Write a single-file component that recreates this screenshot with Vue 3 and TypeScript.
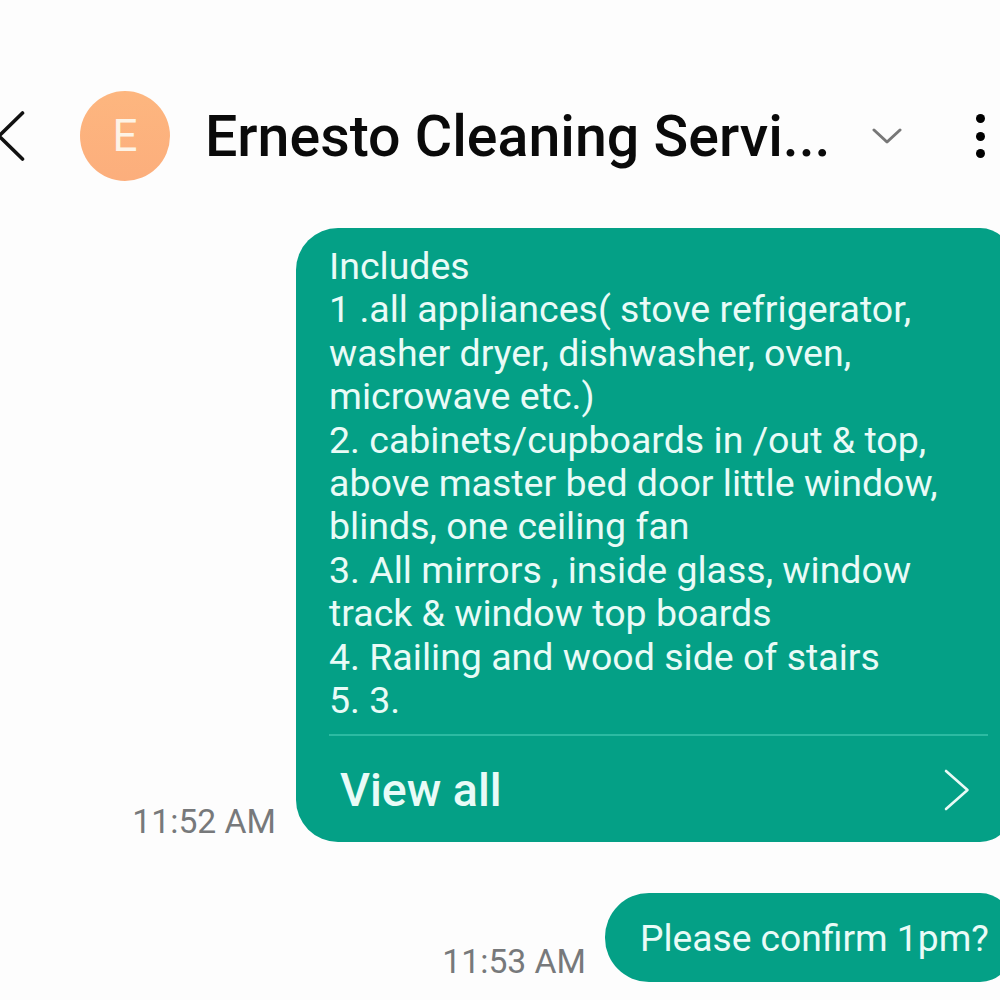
<script setup lang="ts">
const lines = [
  'Includes',
  '1 .all appliances( stove refrigerator,',
  'washer dryer, dishwasher, oven,',
  'microwave etc.)',
  '2. cabinets/cupboards in /out & top,',
  'above master bed door little window,',
  'blinds, one ceiling fan',
  '3. All mirrors , inside glass, window',
  'track & window top boards',
  '4. Railing and wood side of stairs',
  '5. 3.',
]
</script>

<template>
  <div class="screen">
    <header class="top-bar">
      <svg class="back" width="26" height="52" viewBox="0 0 26 52">
        <path d="M22.5 3 L-1 26 L22.5 49" fill="none" stroke="#111" stroke-width="3.6" stroke-linecap="round" stroke-linejoin="round" />
      </svg>
      <div class="avatar">E</div>
      <div class="title">Ernesto Cleaning Servi...</div>
      <svg class="caret" width="30" height="18" viewBox="0 0 30 18">
        <path d="M2 3 L15 15 L28 3" fill="none" stroke="#777" stroke-width="3" stroke-linecap="round" stroke-linejoin="round" />
      </svg>
      <div class="more">
        <span />
        <span />
        <span />
      </div>
    </header>

    <section class="thread">
      <div class="row first">
        <div class="time">11:52 AM</div>
        <div class="bubble big">
          <div class="body">
            <div v-for="line in lines" :key="line" class="line">{{ line }}</div>
          </div>
          <div class="view-all">
            <span>View all</span>
            <svg width="26" height="42" viewBox="0 0 26 42">
              <path d="M2 2 L23.5 21 L2 40" fill="none" stroke="#eafaf6" stroke-width="2.6" stroke-linecap="round" stroke-linejoin="round" />
            </svg>
          </div>
        </div>
      </div>

      <div class="row second">
        <div class="time">11:53 AM</div>
        <div class="bubble small">Please confirm 1pm?</div>
      </div>
    </section>
  </div>
</template>

<style scoped>
.screen {
  width: 1000px;
  height: 1000px;
  overflow: hidden;
  background: #fdfdfd;
  font-family: Roboto, "Liberation Sans", sans-serif;
}

.top-bar {
  display: flex;
  align-items: center;
  height: 90px;
  padding-top: 91px;
}

.back {
  flex: none;
  margin-right: -2px;
}

.avatar {
  flex: none;
  width: 90px;
  height: 90px;
  margin-left: 56px;
  border-radius: 50%;
  background: linear-gradient(180deg, #fdb67f, #fcae7c);
  color: #fdf3e6;
  font-size: 44px;
  line-height: 90px;
  text-align: center;
}

.title {
  flex: none;
  width: 668px;
  margin-left: 35px;
  margin-right: -30px;
  color: #0a0a0a;
  font-size: 57.3px;
  font-weight: 500;
  white-space: nowrap;
}

.caret {
  flex: none;
  margin-left: 29px;
}

.more {
  display: flex;
  flex: none;
  flex-direction: column;
  gap: 8.5px;
  margin-left: 74px;
}

.more span {
  width: 9px;
  height: 9px;
  border-radius: 50%;
  background: #000;
}

.thread {
  display: flex;
  flex-direction: column;
  gap: 51px;
  padding-top: 47px;
}

.row {
  display: flex;
  align-items: flex-end;
  justify-content: flex-end;
  margin-right: -12px;
}

.time {
  color: #77797b;
  font-size: 33.7px;
  white-space: nowrap;
}

.bubble {
  background: #04a086;
  color: #e9fbf7;
  box-sizing: border-box;
}

.first .time {
  margin-right: 20px;
  margin-bottom: 1px;
}

.second .time {
  margin-right: 19px;
  margin-bottom: 1px;
}

.big {
  width: 716px;
  height: 614px;
  border-radius: 42px 32px 32px 42px;
}

.body {
  height: 508px;
  margin: 0 24px 0 33px;
  padding-top: 17px;
  box-sizing: border-box;
  border-bottom: 2px solid #2cbba2;
  font-size: 37.5px;
  line-height: 43.4px;
}

.line {
  white-space: nowrap;
}

.view-all {
  display: flex;
  align-items: center;
  justify-content: space-between;
  height: 108px;
  padding: 0 42px 0 44px;
  font-size: 46.5px;
  font-weight: 500;
}

.small {
  width: 407px;
  height: 89px;
  padding-left: 35px;
  border-radius: 44px 32px 32px 44px;
  font-size: 37.2px;
  line-height: 91px;
  white-space: nowrap;
}
</style>
